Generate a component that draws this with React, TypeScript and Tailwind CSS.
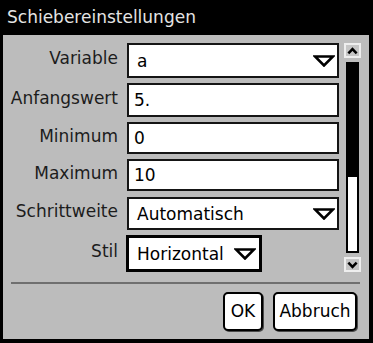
import type { ReactNode } from "react";

// Slider settings dialog, handheld-calculator look: black title bar, grey body,
// white boxed fields, a slim scrollbar on the right.

const font = { fontFamily: '"DejaVu Sans", "Liberation Sans", sans-serif' };

function Triangle({ className }: { className?: string }) {
  return (
    <svg viewBox="0 0 22 12" className={className} aria-hidden>
      <path d="M2 1.5 H20 L11 10.5 Z" fill="none" stroke="#000" strokeWidth="2.6" strokeLinejoin="miter" />
    </svg>
  );
}

function Row({ label, h, mb, children }: { label: string; h: string; mb?: string; children: ReactNode }) {
  return (
    <div className={`flex items-center gap-[9px] ${h} ${mb ?? ""}`}>
      <span className="w-[115px] text-right text-[17px] leading-[20px] text-[#1c1c1c] pb-[5px] whitespace-nowrap">
        {label}
      </span>
      {children}
    </div>
  );
}

function Field({ value }: { value: string }) {
  return (
    <div className="w-[212px] h-full flex items-center bg-white border-2 border-[#151515] px-[5px] text-[17px] leading-[20px] text-black">
      {value}
    </div>
  );
}

function Dropdown({ value }: { value: string }) {
  return (
    <div className="w-[212px] h-full flex items-center justify-between bg-white border-2 border-[#151515] pl-[8px] pr-[2px] text-[17px] leading-[20px] text-black">
      <span>{value}</span>
      <Triangle className="w-[22px] h-[12px]" />
    </div>
  );
}

function ScrollButton({ dir }: { dir: "up" | "down" }) {
  return (
    <div className="w-[17px] h-[15px] flex items-center justify-center border-2 border-[#eeeeee] bg-[#c6c6c6]">
      <svg viewBox="0 0 12 8" className="w-[11px] h-[8px]" aria-hidden>
        <path
          d={dir === "up" ? "M1.5 6.5 L6 2 L10.5 6.5" : "M1.5 1.5 L6 6 L10.5 1.5"}
          fill="none"
          stroke="#000"
          strokeWidth="2.8"
        />
      </svg>
    </div>
  );
}

export default function App() {
  return (
    <div className="w-[373px] h-[343px] flex flex-col bg-black" style={font}>
      <div className="h-[35px] shrink-0 bg-black text-[#e4e4e4] text-[17px] leading-[35px] pl-[7px]">
        Schiebereinstellungen
      </div>

      <div className="flex-1 flex flex-col bg-[#bcbcbc] border-l-[3px] border-r-[4px] border-b-[4px] border-black">
        <div className="flex pt-[8px]">
          <div className="flex flex-col">
            <Row label="Variable" h="h-[35px]" mb="mb-[5px]">
              <Dropdown value="a" />
            </Row>
            <Row label="Anfangswert" h="h-[34px]" mb="mb-[5px]">
              <Field value="5." />
            </Row>
            <Row label="Minimum" h="h-[32px]" mb="mb-[5px]">
              <Field value="0" />
            </Row>
            <Row label="Maximum" h="h-[32px]" mb="mb-[6px]">
              <Field value="10" />
            </Row>
            <Row label="Schrittweite" h="h-[33px]" mb="mb-[5px]">
              <Dropdown value="Automatisch" />
            </Row>
            <Row label="Stil" h="h-[37px]">
              <div className="w-[136px] h-full -ml-[1px] flex items-center justify-between bg-white border-[3px] border-black pl-[8px] pr-[3px] text-[17px] leading-[20px] text-black">
                <span>Horizontal</span>
                <Triangle className="w-[22px] h-[12px]" />
              </div>
            </Row>
          </div>

          <div className="ml-[5px] w-[17px] flex flex-col items-center gap-[4px]">
            <ScrollButton dir="up" />
            <div className="w-[13px] h-[191px] flex flex-col border-2 border-black bg-white">
              <div className="h-[113px] bg-black" />
            </div>
            <ScrollButton dir="down" />
          </div>
        </div>

        <div className="mt-[10px] ml-[8px] mr-[9px] h-[2px] bg-[#6f6f6f]" />

        <div className="flex justify-end gap-[10px] mt-[8px] pr-[12px]">
          <button className="w-[40px] h-[39px] rounded-[5px] border-2 border-black bg-white text-[17px] text-black shadow-[1px_1px_0_#4a4a4a]">
            OK
          </button>
          <button className="w-[84px] h-[39px] rounded-[5px] border-2 border-black bg-white text-[17px] text-black shadow-[1px_1px_0_#4a4a4a]">
            Abbruch
          </button>
        </div>
      </div>
    </div>
  );
}
